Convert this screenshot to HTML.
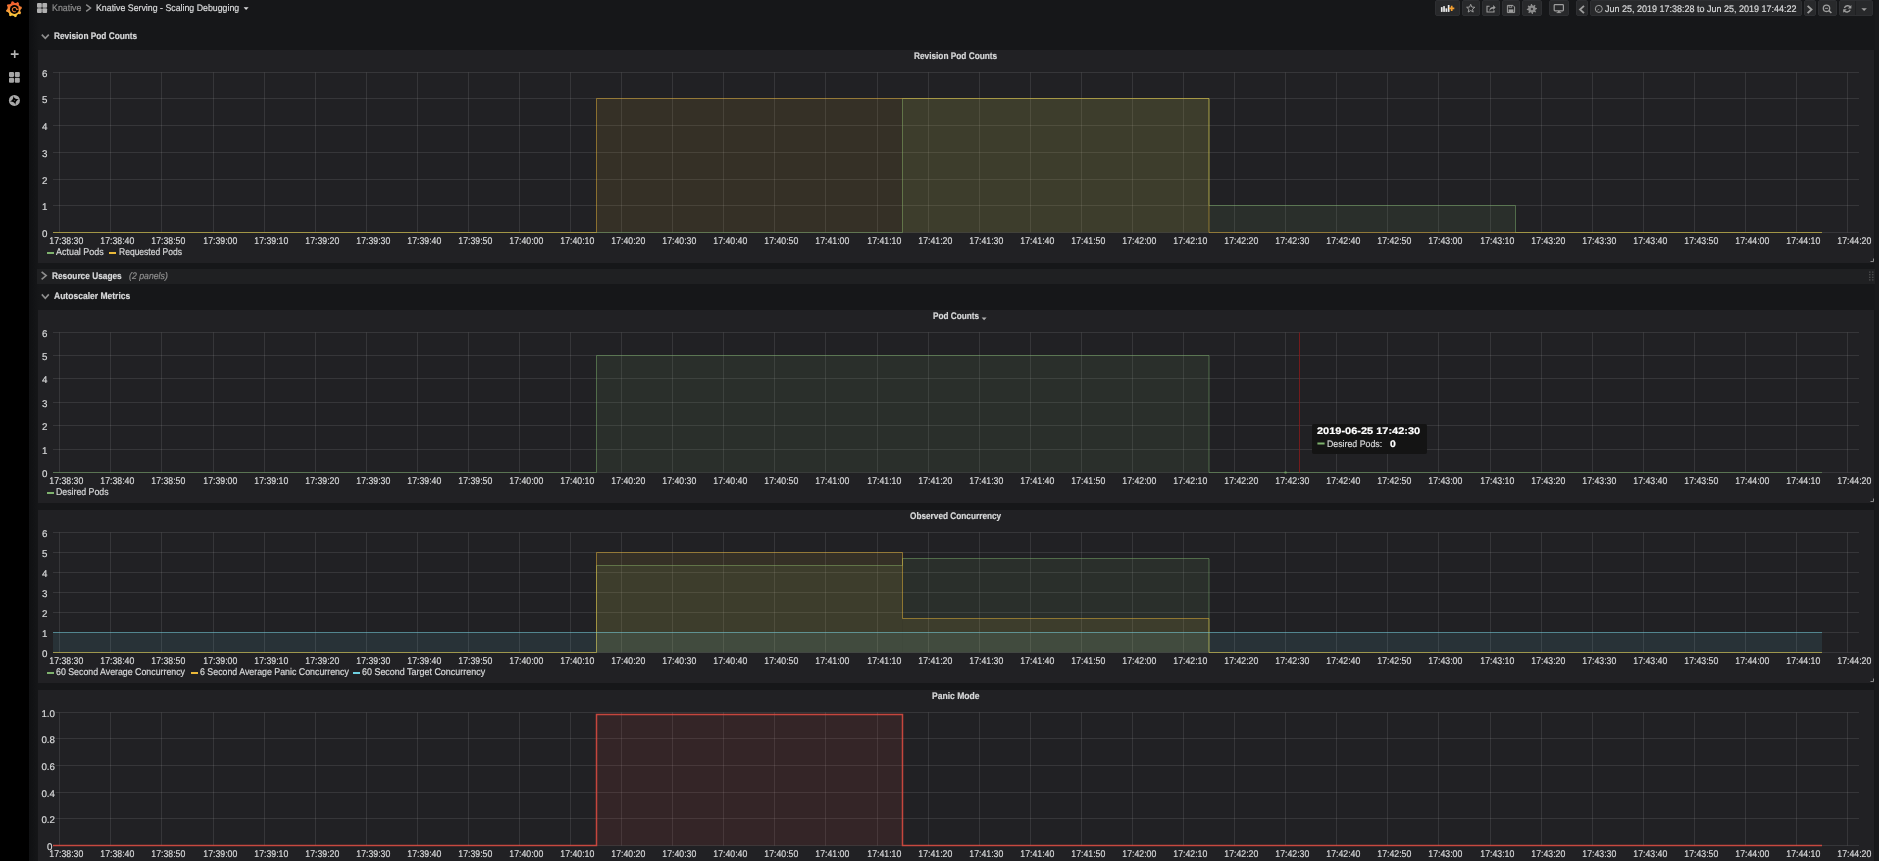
<!DOCTYPE html>
<html><head><meta charset="utf-8"><style>
html,body{margin:0;padding:0;width:1879px;height:861px;overflow:hidden;background:#161719;font-family:"Liberation Sans", sans-serif;text-rendering:geometricPrecision;}
svg text{text-rendering:geometricPrecision;stroke:#d8d9da;stroke-width:0.2px;}
.abs{position:absolute;}
svg.abs{will-change:transform;}
.t{position:absolute;white-space:pre;font-family:"Liberation Sans", sans-serif;-webkit-text-stroke:0.2px currentColor;}
#tx{position:absolute;left:0;top:0;width:1879px;height:861px;will-change:transform;}
.panel{position:absolute;background:#212124;}
.btn{position:absolute;top:0;height:16px;background:#28292b;border:1px solid #2e2f32;box-sizing:border-box;border-radius:2px;}
</style></head><body>
<div class="abs" style="left:0;top:0;width:29px;height:861px;background:#000000"></div>
<div class="abs" style="left:29px;top:0;width:10px;height:861px;background:linear-gradient(to right,#0f1012,#161719)"></div>
<div class="abs" style="left:1875px;top:0;width:4px;height:861px;background:#18191b"></div>
<div class="panel" style="left:38px;top:50px;width:1836px;height:213px"></div>
<div class="abs" style="left:37px;top:269px;width:1838px;height:15px;background:#1f2022"></div>
<div class="panel" style="left:38px;top:310px;width:1836px;height:193px"></div>
<div class="panel" style="left:38px;top:510px;width:1836px;height:173px"></div>
<div class="panel" style="left:38px;top:690px;width:1836px;height:180px"></div>
<div class="btn" style="left:1435px;width:25px"></div>
<div class="btn" style="left:1462px;width:18px"></div>
<div class="btn" style="left:1482px;width:18px"></div>
<div class="btn" style="left:1502px;width:18px"></div>
<div class="btn" style="left:1522px;width:20px"></div>
<div class="btn" style="left:1549px;width:20px"></div>
<div class="btn" style="left:1576px;width:12px"></div>
<div class="btn" style="left:1590px;width:212px"></div>
<div class="btn" style="left:1804px;width:12px"></div>
<div class="btn" style="left:1818px;width:19px"></div>
<div class="btn" style="left:1839px;width:34px"></div>
<svg class="abs" width="1879" height="861" viewBox="0 0 1879 861" font-family="Liberation Sans"><line x1="53.00" y1="232.50" x2="1859.00" y2="232.50" stroke="rgba(200,200,200,0.13)" stroke-width="1"/><text x="47.50" y="236.50" text-anchor="end" font-size="9.75" fill="#d8d9da">0</text><line x1="53.00" y1="205.50" x2="1859.00" y2="205.50" stroke="rgba(200,200,200,0.13)" stroke-width="1"/><text x="47.50" y="209.50" text-anchor="end" font-size="9.75" fill="#d8d9da">1</text><line x1="53.00" y1="179.50" x2="1859.00" y2="179.50" stroke="rgba(200,200,200,0.13)" stroke-width="1"/><text x="47.50" y="183.50" text-anchor="end" font-size="9.75" fill="#d8d9da">2</text><line x1="53.00" y1="152.50" x2="1859.00" y2="152.50" stroke="rgba(200,200,200,0.13)" stroke-width="1"/><text x="47.50" y="156.50" text-anchor="end" font-size="9.75" fill="#d8d9da">3</text><line x1="53.00" y1="125.50" x2="1859.00" y2="125.50" stroke="rgba(200,200,200,0.13)" stroke-width="1"/><text x="47.50" y="129.50" text-anchor="end" font-size="9.75" fill="#d8d9da">4</text><line x1="53.00" y1="98.50" x2="1859.00" y2="98.50" stroke="rgba(200,200,200,0.13)" stroke-width="1"/><text x="47.50" y="102.50" text-anchor="end" font-size="9.75" fill="#d8d9da">5</text><line x1="53.00" y1="72.50" x2="1859.00" y2="72.50" stroke="rgba(200,200,200,0.13)" stroke-width="1"/><text x="47.50" y="76.50" text-anchor="end" font-size="9.75" fill="#d8d9da">6</text><line x1="59.50" y1="72.50" x2="59.50" y2="232.50" stroke="rgba(200,200,200,0.13)" stroke-width="1"/><text x="66.30" y="244.00" text-anchor="middle" font-size="9.75" fill="#d8d9da" textLength="34" lengthAdjust="spacingAndGlyphs">17:38:30</text><line x1="110.50" y1="72.50" x2="110.50" y2="232.50" stroke="rgba(200,200,200,0.13)" stroke-width="1"/><text x="117.30" y="244.00" text-anchor="middle" font-size="9.75" fill="#d8d9da" textLength="34" lengthAdjust="spacingAndGlyphs">17:38:40</text><line x1="161.50" y1="72.50" x2="161.50" y2="232.50" stroke="rgba(200,200,200,0.13)" stroke-width="1"/><text x="168.30" y="244.00" text-anchor="middle" font-size="9.75" fill="#d8d9da" textLength="34" lengthAdjust="spacingAndGlyphs">17:38:50</text><line x1="213.50" y1="72.50" x2="213.50" y2="232.50" stroke="rgba(200,200,200,0.13)" stroke-width="1"/><text x="220.30" y="244.00" text-anchor="middle" font-size="9.75" fill="#d8d9da" textLength="34" lengthAdjust="spacingAndGlyphs">17:39:00</text><line x1="264.50" y1="72.50" x2="264.50" y2="232.50" stroke="rgba(200,200,200,0.13)" stroke-width="1"/><text x="271.30" y="244.00" text-anchor="middle" font-size="9.75" fill="#d8d9da" textLength="34" lengthAdjust="spacingAndGlyphs">17:39:10</text><line x1="315.50" y1="72.50" x2="315.50" y2="232.50" stroke="rgba(200,200,200,0.13)" stroke-width="1"/><text x="322.30" y="244.00" text-anchor="middle" font-size="9.75" fill="#d8d9da" textLength="34" lengthAdjust="spacingAndGlyphs">17:39:20</text><line x1="366.50" y1="72.50" x2="366.50" y2="232.50" stroke="rgba(200,200,200,0.13)" stroke-width="1"/><text x="373.30" y="244.00" text-anchor="middle" font-size="9.75" fill="#d8d9da" textLength="34" lengthAdjust="spacingAndGlyphs">17:39:30</text><line x1="417.50" y1="72.50" x2="417.50" y2="232.50" stroke="rgba(200,200,200,0.13)" stroke-width="1"/><text x="424.30" y="244.00" text-anchor="middle" font-size="9.75" fill="#d8d9da" textLength="34" lengthAdjust="spacingAndGlyphs">17:39:40</text><line x1="468.50" y1="72.50" x2="468.50" y2="232.50" stroke="rgba(200,200,200,0.13)" stroke-width="1"/><text x="475.30" y="244.00" text-anchor="middle" font-size="9.75" fill="#d8d9da" textLength="34" lengthAdjust="spacingAndGlyphs">17:39:50</text><line x1="519.50" y1="72.50" x2="519.50" y2="232.50" stroke="rgba(200,200,200,0.13)" stroke-width="1"/><text x="526.30" y="244.00" text-anchor="middle" font-size="9.75" fill="#d8d9da" textLength="34" lengthAdjust="spacingAndGlyphs">17:40:00</text><line x1="570.50" y1="72.50" x2="570.50" y2="232.50" stroke="rgba(200,200,200,0.13)" stroke-width="1"/><text x="577.30" y="244.00" text-anchor="middle" font-size="9.75" fill="#d8d9da" textLength="34" lengthAdjust="spacingAndGlyphs">17:40:10</text><line x1="621.50" y1="72.50" x2="621.50" y2="232.50" stroke="rgba(200,200,200,0.13)" stroke-width="1"/><text x="628.30" y="244.00" text-anchor="middle" font-size="9.75" fill="#d8d9da" textLength="34" lengthAdjust="spacingAndGlyphs">17:40:20</text><line x1="672.50" y1="72.50" x2="672.50" y2="232.50" stroke="rgba(200,200,200,0.13)" stroke-width="1"/><text x="679.30" y="244.00" text-anchor="middle" font-size="9.75" fill="#d8d9da" textLength="34" lengthAdjust="spacingAndGlyphs">17:40:30</text><line x1="723.50" y1="72.50" x2="723.50" y2="232.50" stroke="rgba(200,200,200,0.13)" stroke-width="1"/><text x="730.30" y="244.00" text-anchor="middle" font-size="9.75" fill="#d8d9da" textLength="34" lengthAdjust="spacingAndGlyphs">17:40:40</text><line x1="774.50" y1="72.50" x2="774.50" y2="232.50" stroke="rgba(200,200,200,0.13)" stroke-width="1"/><text x="781.30" y="244.00" text-anchor="middle" font-size="9.75" fill="#d8d9da" textLength="34" lengthAdjust="spacingAndGlyphs">17:40:50</text><line x1="825.50" y1="72.50" x2="825.50" y2="232.50" stroke="rgba(200,200,200,0.13)" stroke-width="1"/><text x="832.30" y="244.00" text-anchor="middle" font-size="9.75" fill="#d8d9da" textLength="34" lengthAdjust="spacingAndGlyphs">17:41:00</text><line x1="877.50" y1="72.50" x2="877.50" y2="232.50" stroke="rgba(200,200,200,0.13)" stroke-width="1"/><text x="884.30" y="244.00" text-anchor="middle" font-size="9.75" fill="#d8d9da" textLength="34" lengthAdjust="spacingAndGlyphs">17:41:10</text><line x1="928.50" y1="72.50" x2="928.50" y2="232.50" stroke="rgba(200,200,200,0.13)" stroke-width="1"/><text x="935.30" y="244.00" text-anchor="middle" font-size="9.75" fill="#d8d9da" textLength="34" lengthAdjust="spacingAndGlyphs">17:41:20</text><line x1="979.50" y1="72.50" x2="979.50" y2="232.50" stroke="rgba(200,200,200,0.13)" stroke-width="1"/><text x="986.30" y="244.00" text-anchor="middle" font-size="9.75" fill="#d8d9da" textLength="34" lengthAdjust="spacingAndGlyphs">17:41:30</text><line x1="1030.50" y1="72.50" x2="1030.50" y2="232.50" stroke="rgba(200,200,200,0.13)" stroke-width="1"/><text x="1037.30" y="244.00" text-anchor="middle" font-size="9.75" fill="#d8d9da" textLength="34" lengthAdjust="spacingAndGlyphs">17:41:40</text><line x1="1081.50" y1="72.50" x2="1081.50" y2="232.50" stroke="rgba(200,200,200,0.13)" stroke-width="1"/><text x="1088.30" y="244.00" text-anchor="middle" font-size="9.75" fill="#d8d9da" textLength="34" lengthAdjust="spacingAndGlyphs">17:41:50</text><line x1="1132.50" y1="72.50" x2="1132.50" y2="232.50" stroke="rgba(200,200,200,0.13)" stroke-width="1"/><text x="1139.30" y="244.00" text-anchor="middle" font-size="9.75" fill="#d8d9da" textLength="34" lengthAdjust="spacingAndGlyphs">17:42:00</text><line x1="1183.50" y1="72.50" x2="1183.50" y2="232.50" stroke="rgba(200,200,200,0.13)" stroke-width="1"/><text x="1190.30" y="244.00" text-anchor="middle" font-size="9.75" fill="#d8d9da" textLength="34" lengthAdjust="spacingAndGlyphs">17:42:10</text><line x1="1234.50" y1="72.50" x2="1234.50" y2="232.50" stroke="rgba(200,200,200,0.13)" stroke-width="1"/><text x="1241.30" y="244.00" text-anchor="middle" font-size="9.75" fill="#d8d9da" textLength="34" lengthAdjust="spacingAndGlyphs">17:42:20</text><line x1="1285.50" y1="72.50" x2="1285.50" y2="232.50" stroke="rgba(200,200,200,0.13)" stroke-width="1"/><text x="1292.30" y="244.00" text-anchor="middle" font-size="9.75" fill="#d8d9da" textLength="34" lengthAdjust="spacingAndGlyphs">17:42:30</text><line x1="1336.50" y1="72.50" x2="1336.50" y2="232.50" stroke="rgba(200,200,200,0.13)" stroke-width="1"/><text x="1343.30" y="244.00" text-anchor="middle" font-size="9.75" fill="#d8d9da" textLength="34" lengthAdjust="spacingAndGlyphs">17:42:40</text><line x1="1387.50" y1="72.50" x2="1387.50" y2="232.50" stroke="rgba(200,200,200,0.13)" stroke-width="1"/><text x="1394.30" y="244.00" text-anchor="middle" font-size="9.75" fill="#d8d9da" textLength="34" lengthAdjust="spacingAndGlyphs">17:42:50</text><line x1="1438.50" y1="72.50" x2="1438.50" y2="232.50" stroke="rgba(200,200,200,0.13)" stroke-width="1"/><text x="1445.30" y="244.00" text-anchor="middle" font-size="9.75" fill="#d8d9da" textLength="34" lengthAdjust="spacingAndGlyphs">17:43:00</text><line x1="1490.50" y1="72.50" x2="1490.50" y2="232.50" stroke="rgba(200,200,200,0.13)" stroke-width="1"/><text x="1497.30" y="244.00" text-anchor="middle" font-size="9.75" fill="#d8d9da" textLength="34" lengthAdjust="spacingAndGlyphs">17:43:10</text><line x1="1541.50" y1="72.50" x2="1541.50" y2="232.50" stroke="rgba(200,200,200,0.13)" stroke-width="1"/><text x="1548.30" y="244.00" text-anchor="middle" font-size="9.75" fill="#d8d9da" textLength="34" lengthAdjust="spacingAndGlyphs">17:43:20</text><line x1="1592.50" y1="72.50" x2="1592.50" y2="232.50" stroke="rgba(200,200,200,0.13)" stroke-width="1"/><text x="1599.30" y="244.00" text-anchor="middle" font-size="9.75" fill="#d8d9da" textLength="34" lengthAdjust="spacingAndGlyphs">17:43:30</text><line x1="1643.50" y1="72.50" x2="1643.50" y2="232.50" stroke="rgba(200,200,200,0.13)" stroke-width="1"/><text x="1650.30" y="244.00" text-anchor="middle" font-size="9.75" fill="#d8d9da" textLength="34" lengthAdjust="spacingAndGlyphs">17:43:40</text><line x1="1694.50" y1="72.50" x2="1694.50" y2="232.50" stroke="rgba(200,200,200,0.13)" stroke-width="1"/><text x="1701.30" y="244.00" text-anchor="middle" font-size="9.75" fill="#d8d9da" textLength="34" lengthAdjust="spacingAndGlyphs">17:43:50</text><line x1="1745.50" y1="72.50" x2="1745.50" y2="232.50" stroke="rgba(200,200,200,0.13)" stroke-width="1"/><text x="1752.30" y="244.00" text-anchor="middle" font-size="9.75" fill="#d8d9da" textLength="34" lengthAdjust="spacingAndGlyphs">17:44:00</text><line x1="1796.50" y1="72.50" x2="1796.50" y2="232.50" stroke="rgba(200,200,200,0.13)" stroke-width="1"/><text x="1803.30" y="244.00" text-anchor="middle" font-size="9.75" fill="#d8d9da" textLength="34" lengthAdjust="spacingAndGlyphs">17:44:10</text><line x1="1847.50" y1="72.50" x2="1847.50" y2="232.50" stroke="rgba(200,200,200,0.13)" stroke-width="1"/><text x="1854.30" y="244.00" text-anchor="middle" font-size="9.75" fill="#d8d9da" textLength="34" lengthAdjust="spacingAndGlyphs">17:44:20</text><rect x="902.50" y="98.50" width="306.50" height="134.00" fill="#7EB26D" fill-opacity="0.1"/><rect x="1209.00" y="205.50" width="306.50" height="27.00" fill="#7EB26D" fill-opacity="0.1"/><path d="M53.00,232.50 L902.50,232.50 L902.50,98.50 L1209.00,98.50 L1209.00,205.50 L1515.50,205.50 L1515.50,232.50 L1822.00,232.50" fill="none" stroke="#7EB26D" stroke-width="1" stroke-opacity="0.5"/><rect x="596.50" y="98.50" width="612.50" height="134.00" fill="#EAB839" fill-opacity="0.1"/><path d="M53.00,232.50 L596.50,232.50 L596.50,98.50 L1209.00,98.50 L1209.00,232.50 L1822.00,232.50" fill="none" stroke="#EAB839" stroke-width="1" stroke-opacity="0.5"/><line x1="53.00" y1="472.50" x2="1859.00" y2="472.50" stroke="rgba(200,200,200,0.13)" stroke-width="1"/><text x="47.50" y="476.50" text-anchor="end" font-size="9.75" fill="#d8d9da">0</text><line x1="53.00" y1="449.50" x2="1859.00" y2="449.50" stroke="rgba(200,200,200,0.13)" stroke-width="1"/><text x="47.50" y="453.50" text-anchor="end" font-size="9.75" fill="#d8d9da">1</text><line x1="53.00" y1="425.50" x2="1859.00" y2="425.50" stroke="rgba(200,200,200,0.13)" stroke-width="1"/><text x="47.50" y="429.50" text-anchor="end" font-size="9.75" fill="#d8d9da">2</text><line x1="53.00" y1="402.50" x2="1859.00" y2="402.50" stroke="rgba(200,200,200,0.13)" stroke-width="1"/><text x="47.50" y="406.50" text-anchor="end" font-size="9.75" fill="#d8d9da">3</text><line x1="53.00" y1="378.50" x2="1859.00" y2="378.50" stroke="rgba(200,200,200,0.13)" stroke-width="1"/><text x="47.50" y="382.50" text-anchor="end" font-size="9.75" fill="#d8d9da">4</text><line x1="53.00" y1="355.50" x2="1859.00" y2="355.50" stroke="rgba(200,200,200,0.13)" stroke-width="1"/><text x="47.50" y="359.50" text-anchor="end" font-size="9.75" fill="#d8d9da">5</text><line x1="53.00" y1="332.50" x2="1859.00" y2="332.50" stroke="rgba(200,200,200,0.13)" stroke-width="1"/><text x="47.50" y="336.50" text-anchor="end" font-size="9.75" fill="#d8d9da">6</text><line x1="59.50" y1="332.50" x2="59.50" y2="472.50" stroke="rgba(200,200,200,0.13)" stroke-width="1"/><text x="66.30" y="484.00" text-anchor="middle" font-size="9.75" fill="#d8d9da" textLength="34" lengthAdjust="spacingAndGlyphs">17:38:30</text><line x1="110.50" y1="332.50" x2="110.50" y2="472.50" stroke="rgba(200,200,200,0.13)" stroke-width="1"/><text x="117.30" y="484.00" text-anchor="middle" font-size="9.75" fill="#d8d9da" textLength="34" lengthAdjust="spacingAndGlyphs">17:38:40</text><line x1="161.50" y1="332.50" x2="161.50" y2="472.50" stroke="rgba(200,200,200,0.13)" stroke-width="1"/><text x="168.30" y="484.00" text-anchor="middle" font-size="9.75" fill="#d8d9da" textLength="34" lengthAdjust="spacingAndGlyphs">17:38:50</text><line x1="213.50" y1="332.50" x2="213.50" y2="472.50" stroke="rgba(200,200,200,0.13)" stroke-width="1"/><text x="220.30" y="484.00" text-anchor="middle" font-size="9.75" fill="#d8d9da" textLength="34" lengthAdjust="spacingAndGlyphs">17:39:00</text><line x1="264.50" y1="332.50" x2="264.50" y2="472.50" stroke="rgba(200,200,200,0.13)" stroke-width="1"/><text x="271.30" y="484.00" text-anchor="middle" font-size="9.75" fill="#d8d9da" textLength="34" lengthAdjust="spacingAndGlyphs">17:39:10</text><line x1="315.50" y1="332.50" x2="315.50" y2="472.50" stroke="rgba(200,200,200,0.13)" stroke-width="1"/><text x="322.30" y="484.00" text-anchor="middle" font-size="9.75" fill="#d8d9da" textLength="34" lengthAdjust="spacingAndGlyphs">17:39:20</text><line x1="366.50" y1="332.50" x2="366.50" y2="472.50" stroke="rgba(200,200,200,0.13)" stroke-width="1"/><text x="373.30" y="484.00" text-anchor="middle" font-size="9.75" fill="#d8d9da" textLength="34" lengthAdjust="spacingAndGlyphs">17:39:30</text><line x1="417.50" y1="332.50" x2="417.50" y2="472.50" stroke="rgba(200,200,200,0.13)" stroke-width="1"/><text x="424.30" y="484.00" text-anchor="middle" font-size="9.75" fill="#d8d9da" textLength="34" lengthAdjust="spacingAndGlyphs">17:39:40</text><line x1="468.50" y1="332.50" x2="468.50" y2="472.50" stroke="rgba(200,200,200,0.13)" stroke-width="1"/><text x="475.30" y="484.00" text-anchor="middle" font-size="9.75" fill="#d8d9da" textLength="34" lengthAdjust="spacingAndGlyphs">17:39:50</text><line x1="519.50" y1="332.50" x2="519.50" y2="472.50" stroke="rgba(200,200,200,0.13)" stroke-width="1"/><text x="526.30" y="484.00" text-anchor="middle" font-size="9.75" fill="#d8d9da" textLength="34" lengthAdjust="spacingAndGlyphs">17:40:00</text><line x1="570.50" y1="332.50" x2="570.50" y2="472.50" stroke="rgba(200,200,200,0.13)" stroke-width="1"/><text x="577.30" y="484.00" text-anchor="middle" font-size="9.75" fill="#d8d9da" textLength="34" lengthAdjust="spacingAndGlyphs">17:40:10</text><line x1="621.50" y1="332.50" x2="621.50" y2="472.50" stroke="rgba(200,200,200,0.13)" stroke-width="1"/><text x="628.30" y="484.00" text-anchor="middle" font-size="9.75" fill="#d8d9da" textLength="34" lengthAdjust="spacingAndGlyphs">17:40:20</text><line x1="672.50" y1="332.50" x2="672.50" y2="472.50" stroke="rgba(200,200,200,0.13)" stroke-width="1"/><text x="679.30" y="484.00" text-anchor="middle" font-size="9.75" fill="#d8d9da" textLength="34" lengthAdjust="spacingAndGlyphs">17:40:30</text><line x1="723.50" y1="332.50" x2="723.50" y2="472.50" stroke="rgba(200,200,200,0.13)" stroke-width="1"/><text x="730.30" y="484.00" text-anchor="middle" font-size="9.75" fill="#d8d9da" textLength="34" lengthAdjust="spacingAndGlyphs">17:40:40</text><line x1="774.50" y1="332.50" x2="774.50" y2="472.50" stroke="rgba(200,200,200,0.13)" stroke-width="1"/><text x="781.30" y="484.00" text-anchor="middle" font-size="9.75" fill="#d8d9da" textLength="34" lengthAdjust="spacingAndGlyphs">17:40:50</text><line x1="825.50" y1="332.50" x2="825.50" y2="472.50" stroke="rgba(200,200,200,0.13)" stroke-width="1"/><text x="832.30" y="484.00" text-anchor="middle" font-size="9.75" fill="#d8d9da" textLength="34" lengthAdjust="spacingAndGlyphs">17:41:00</text><line x1="877.50" y1="332.50" x2="877.50" y2="472.50" stroke="rgba(200,200,200,0.13)" stroke-width="1"/><text x="884.30" y="484.00" text-anchor="middle" font-size="9.75" fill="#d8d9da" textLength="34" lengthAdjust="spacingAndGlyphs">17:41:10</text><line x1="928.50" y1="332.50" x2="928.50" y2="472.50" stroke="rgba(200,200,200,0.13)" stroke-width="1"/><text x="935.30" y="484.00" text-anchor="middle" font-size="9.75" fill="#d8d9da" textLength="34" lengthAdjust="spacingAndGlyphs">17:41:20</text><line x1="979.50" y1="332.50" x2="979.50" y2="472.50" stroke="rgba(200,200,200,0.13)" stroke-width="1"/><text x="986.30" y="484.00" text-anchor="middle" font-size="9.75" fill="#d8d9da" textLength="34" lengthAdjust="spacingAndGlyphs">17:41:30</text><line x1="1030.50" y1="332.50" x2="1030.50" y2="472.50" stroke="rgba(200,200,200,0.13)" stroke-width="1"/><text x="1037.30" y="484.00" text-anchor="middle" font-size="9.75" fill="#d8d9da" textLength="34" lengthAdjust="spacingAndGlyphs">17:41:40</text><line x1="1081.50" y1="332.50" x2="1081.50" y2="472.50" stroke="rgba(200,200,200,0.13)" stroke-width="1"/><text x="1088.30" y="484.00" text-anchor="middle" font-size="9.75" fill="#d8d9da" textLength="34" lengthAdjust="spacingAndGlyphs">17:41:50</text><line x1="1132.50" y1="332.50" x2="1132.50" y2="472.50" stroke="rgba(200,200,200,0.13)" stroke-width="1"/><text x="1139.30" y="484.00" text-anchor="middle" font-size="9.75" fill="#d8d9da" textLength="34" lengthAdjust="spacingAndGlyphs">17:42:00</text><line x1="1183.50" y1="332.50" x2="1183.50" y2="472.50" stroke="rgba(200,200,200,0.13)" stroke-width="1"/><text x="1190.30" y="484.00" text-anchor="middle" font-size="9.75" fill="#d8d9da" textLength="34" lengthAdjust="spacingAndGlyphs">17:42:10</text><line x1="1234.50" y1="332.50" x2="1234.50" y2="472.50" stroke="rgba(200,200,200,0.13)" stroke-width="1"/><text x="1241.30" y="484.00" text-anchor="middle" font-size="9.75" fill="#d8d9da" textLength="34" lengthAdjust="spacingAndGlyphs">17:42:20</text><line x1="1285.50" y1="332.50" x2="1285.50" y2="472.50" stroke="rgba(200,200,200,0.13)" stroke-width="1"/><text x="1292.30" y="484.00" text-anchor="middle" font-size="9.75" fill="#d8d9da" textLength="34" lengthAdjust="spacingAndGlyphs">17:42:30</text><line x1="1336.50" y1="332.50" x2="1336.50" y2="472.50" stroke="rgba(200,200,200,0.13)" stroke-width="1"/><text x="1343.30" y="484.00" text-anchor="middle" font-size="9.75" fill="#d8d9da" textLength="34" lengthAdjust="spacingAndGlyphs">17:42:40</text><line x1="1387.50" y1="332.50" x2="1387.50" y2="472.50" stroke="rgba(200,200,200,0.13)" stroke-width="1"/><text x="1394.30" y="484.00" text-anchor="middle" font-size="9.75" fill="#d8d9da" textLength="34" lengthAdjust="spacingAndGlyphs">17:42:50</text><line x1="1438.50" y1="332.50" x2="1438.50" y2="472.50" stroke="rgba(200,200,200,0.13)" stroke-width="1"/><text x="1445.30" y="484.00" text-anchor="middle" font-size="9.75" fill="#d8d9da" textLength="34" lengthAdjust="spacingAndGlyphs">17:43:00</text><line x1="1490.50" y1="332.50" x2="1490.50" y2="472.50" stroke="rgba(200,200,200,0.13)" stroke-width="1"/><text x="1497.30" y="484.00" text-anchor="middle" font-size="9.75" fill="#d8d9da" textLength="34" lengthAdjust="spacingAndGlyphs">17:43:10</text><line x1="1541.50" y1="332.50" x2="1541.50" y2="472.50" stroke="rgba(200,200,200,0.13)" stroke-width="1"/><text x="1548.30" y="484.00" text-anchor="middle" font-size="9.75" fill="#d8d9da" textLength="34" lengthAdjust="spacingAndGlyphs">17:43:20</text><line x1="1592.50" y1="332.50" x2="1592.50" y2="472.50" stroke="rgba(200,200,200,0.13)" stroke-width="1"/><text x="1599.30" y="484.00" text-anchor="middle" font-size="9.75" fill="#d8d9da" textLength="34" lengthAdjust="spacingAndGlyphs">17:43:30</text><line x1="1643.50" y1="332.50" x2="1643.50" y2="472.50" stroke="rgba(200,200,200,0.13)" stroke-width="1"/><text x="1650.30" y="484.00" text-anchor="middle" font-size="9.75" fill="#d8d9da" textLength="34" lengthAdjust="spacingAndGlyphs">17:43:40</text><line x1="1694.50" y1="332.50" x2="1694.50" y2="472.50" stroke="rgba(200,200,200,0.13)" stroke-width="1"/><text x="1701.30" y="484.00" text-anchor="middle" font-size="9.75" fill="#d8d9da" textLength="34" lengthAdjust="spacingAndGlyphs">17:43:50</text><line x1="1745.50" y1="332.50" x2="1745.50" y2="472.50" stroke="rgba(200,200,200,0.13)" stroke-width="1"/><text x="1752.30" y="484.00" text-anchor="middle" font-size="9.75" fill="#d8d9da" textLength="34" lengthAdjust="spacingAndGlyphs">17:44:00</text><line x1="1796.50" y1="332.50" x2="1796.50" y2="472.50" stroke="rgba(200,200,200,0.13)" stroke-width="1"/><text x="1803.30" y="484.00" text-anchor="middle" font-size="9.75" fill="#d8d9da" textLength="34" lengthAdjust="spacingAndGlyphs">17:44:10</text><line x1="1847.50" y1="332.50" x2="1847.50" y2="472.50" stroke="rgba(200,200,200,0.13)" stroke-width="1"/><text x="1854.30" y="484.00" text-anchor="middle" font-size="9.75" fill="#d8d9da" textLength="34" lengthAdjust="spacingAndGlyphs">17:44:20</text><rect x="596.50" y="355.50" width="612.50" height="117.00" fill="#7EB26D" fill-opacity="0.1"/><path d="M53.00,472.50 L596.50,472.50 L596.50,355.50 L1209.00,355.50 L1209.00,472.50 L1822.00,472.50" fill="none" stroke="#7EB26D" stroke-width="1" stroke-opacity="0.5"/><line x1="1299.5" y1="332.5" x2="1299.5" y2="472.5" stroke="#8a1a1a" stroke-opacity="0.8"/><line x1="53.00" y1="652.50" x2="1859.00" y2="652.50" stroke="rgba(200,200,200,0.13)" stroke-width="1"/><text x="47.50" y="656.50" text-anchor="end" font-size="9.75" fill="#d8d9da">0</text><line x1="53.00" y1="632.50" x2="1859.00" y2="632.50" stroke="rgba(200,200,200,0.13)" stroke-width="1"/><text x="47.50" y="636.50" text-anchor="end" font-size="9.75" fill="#d8d9da">1</text><line x1="53.00" y1="612.50" x2="1859.00" y2="612.50" stroke="rgba(200,200,200,0.13)" stroke-width="1"/><text x="47.50" y="616.50" text-anchor="end" font-size="9.75" fill="#d8d9da">2</text><line x1="53.00" y1="592.50" x2="1859.00" y2="592.50" stroke="rgba(200,200,200,0.13)" stroke-width="1"/><text x="47.50" y="596.50" text-anchor="end" font-size="9.75" fill="#d8d9da">3</text><line x1="53.00" y1="572.50" x2="1859.00" y2="572.50" stroke="rgba(200,200,200,0.13)" stroke-width="1"/><text x="47.50" y="576.50" text-anchor="end" font-size="9.75" fill="#d8d9da">4</text><line x1="53.00" y1="552.50" x2="1859.00" y2="552.50" stroke="rgba(200,200,200,0.13)" stroke-width="1"/><text x="47.50" y="556.50" text-anchor="end" font-size="9.75" fill="#d8d9da">5</text><line x1="53.00" y1="532.50" x2="1859.00" y2="532.50" stroke="rgba(200,200,200,0.13)" stroke-width="1"/><text x="47.50" y="536.50" text-anchor="end" font-size="9.75" fill="#d8d9da">6</text><line x1="59.50" y1="532.50" x2="59.50" y2="652.50" stroke="rgba(200,200,200,0.13)" stroke-width="1"/><text x="66.30" y="664.00" text-anchor="middle" font-size="9.75" fill="#d8d9da" textLength="34" lengthAdjust="spacingAndGlyphs">17:38:30</text><line x1="110.50" y1="532.50" x2="110.50" y2="652.50" stroke="rgba(200,200,200,0.13)" stroke-width="1"/><text x="117.30" y="664.00" text-anchor="middle" font-size="9.75" fill="#d8d9da" textLength="34" lengthAdjust="spacingAndGlyphs">17:38:40</text><line x1="161.50" y1="532.50" x2="161.50" y2="652.50" stroke="rgba(200,200,200,0.13)" stroke-width="1"/><text x="168.30" y="664.00" text-anchor="middle" font-size="9.75" fill="#d8d9da" textLength="34" lengthAdjust="spacingAndGlyphs">17:38:50</text><line x1="213.50" y1="532.50" x2="213.50" y2="652.50" stroke="rgba(200,200,200,0.13)" stroke-width="1"/><text x="220.30" y="664.00" text-anchor="middle" font-size="9.75" fill="#d8d9da" textLength="34" lengthAdjust="spacingAndGlyphs">17:39:00</text><line x1="264.50" y1="532.50" x2="264.50" y2="652.50" stroke="rgba(200,200,200,0.13)" stroke-width="1"/><text x="271.30" y="664.00" text-anchor="middle" font-size="9.75" fill="#d8d9da" textLength="34" lengthAdjust="spacingAndGlyphs">17:39:10</text><line x1="315.50" y1="532.50" x2="315.50" y2="652.50" stroke="rgba(200,200,200,0.13)" stroke-width="1"/><text x="322.30" y="664.00" text-anchor="middle" font-size="9.75" fill="#d8d9da" textLength="34" lengthAdjust="spacingAndGlyphs">17:39:20</text><line x1="366.50" y1="532.50" x2="366.50" y2="652.50" stroke="rgba(200,200,200,0.13)" stroke-width="1"/><text x="373.30" y="664.00" text-anchor="middle" font-size="9.75" fill="#d8d9da" textLength="34" lengthAdjust="spacingAndGlyphs">17:39:30</text><line x1="417.50" y1="532.50" x2="417.50" y2="652.50" stroke="rgba(200,200,200,0.13)" stroke-width="1"/><text x="424.30" y="664.00" text-anchor="middle" font-size="9.75" fill="#d8d9da" textLength="34" lengthAdjust="spacingAndGlyphs">17:39:40</text><line x1="468.50" y1="532.50" x2="468.50" y2="652.50" stroke="rgba(200,200,200,0.13)" stroke-width="1"/><text x="475.30" y="664.00" text-anchor="middle" font-size="9.75" fill="#d8d9da" textLength="34" lengthAdjust="spacingAndGlyphs">17:39:50</text><line x1="519.50" y1="532.50" x2="519.50" y2="652.50" stroke="rgba(200,200,200,0.13)" stroke-width="1"/><text x="526.30" y="664.00" text-anchor="middle" font-size="9.75" fill="#d8d9da" textLength="34" lengthAdjust="spacingAndGlyphs">17:40:00</text><line x1="570.50" y1="532.50" x2="570.50" y2="652.50" stroke="rgba(200,200,200,0.13)" stroke-width="1"/><text x="577.30" y="664.00" text-anchor="middle" font-size="9.75" fill="#d8d9da" textLength="34" lengthAdjust="spacingAndGlyphs">17:40:10</text><line x1="621.50" y1="532.50" x2="621.50" y2="652.50" stroke="rgba(200,200,200,0.13)" stroke-width="1"/><text x="628.30" y="664.00" text-anchor="middle" font-size="9.75" fill="#d8d9da" textLength="34" lengthAdjust="spacingAndGlyphs">17:40:20</text><line x1="672.50" y1="532.50" x2="672.50" y2="652.50" stroke="rgba(200,200,200,0.13)" stroke-width="1"/><text x="679.30" y="664.00" text-anchor="middle" font-size="9.75" fill="#d8d9da" textLength="34" lengthAdjust="spacingAndGlyphs">17:40:30</text><line x1="723.50" y1="532.50" x2="723.50" y2="652.50" stroke="rgba(200,200,200,0.13)" stroke-width="1"/><text x="730.30" y="664.00" text-anchor="middle" font-size="9.75" fill="#d8d9da" textLength="34" lengthAdjust="spacingAndGlyphs">17:40:40</text><line x1="774.50" y1="532.50" x2="774.50" y2="652.50" stroke="rgba(200,200,200,0.13)" stroke-width="1"/><text x="781.30" y="664.00" text-anchor="middle" font-size="9.75" fill="#d8d9da" textLength="34" lengthAdjust="spacingAndGlyphs">17:40:50</text><line x1="825.50" y1="532.50" x2="825.50" y2="652.50" stroke="rgba(200,200,200,0.13)" stroke-width="1"/><text x="832.30" y="664.00" text-anchor="middle" font-size="9.75" fill="#d8d9da" textLength="34" lengthAdjust="spacingAndGlyphs">17:41:00</text><line x1="877.50" y1="532.50" x2="877.50" y2="652.50" stroke="rgba(200,200,200,0.13)" stroke-width="1"/><text x="884.30" y="664.00" text-anchor="middle" font-size="9.75" fill="#d8d9da" textLength="34" lengthAdjust="spacingAndGlyphs">17:41:10</text><line x1="928.50" y1="532.50" x2="928.50" y2="652.50" stroke="rgba(200,200,200,0.13)" stroke-width="1"/><text x="935.30" y="664.00" text-anchor="middle" font-size="9.75" fill="#d8d9da" textLength="34" lengthAdjust="spacingAndGlyphs">17:41:20</text><line x1="979.50" y1="532.50" x2="979.50" y2="652.50" stroke="rgba(200,200,200,0.13)" stroke-width="1"/><text x="986.30" y="664.00" text-anchor="middle" font-size="9.75" fill="#d8d9da" textLength="34" lengthAdjust="spacingAndGlyphs">17:41:30</text><line x1="1030.50" y1="532.50" x2="1030.50" y2="652.50" stroke="rgba(200,200,200,0.13)" stroke-width="1"/><text x="1037.30" y="664.00" text-anchor="middle" font-size="9.75" fill="#d8d9da" textLength="34" lengthAdjust="spacingAndGlyphs">17:41:40</text><line x1="1081.50" y1="532.50" x2="1081.50" y2="652.50" stroke="rgba(200,200,200,0.13)" stroke-width="1"/><text x="1088.30" y="664.00" text-anchor="middle" font-size="9.75" fill="#d8d9da" textLength="34" lengthAdjust="spacingAndGlyphs">17:41:50</text><line x1="1132.50" y1="532.50" x2="1132.50" y2="652.50" stroke="rgba(200,200,200,0.13)" stroke-width="1"/><text x="1139.30" y="664.00" text-anchor="middle" font-size="9.75" fill="#d8d9da" textLength="34" lengthAdjust="spacingAndGlyphs">17:42:00</text><line x1="1183.50" y1="532.50" x2="1183.50" y2="652.50" stroke="rgba(200,200,200,0.13)" stroke-width="1"/><text x="1190.30" y="664.00" text-anchor="middle" font-size="9.75" fill="#d8d9da" textLength="34" lengthAdjust="spacingAndGlyphs">17:42:10</text><line x1="1234.50" y1="532.50" x2="1234.50" y2="652.50" stroke="rgba(200,200,200,0.13)" stroke-width="1"/><text x="1241.30" y="664.00" text-anchor="middle" font-size="9.75" fill="#d8d9da" textLength="34" lengthAdjust="spacingAndGlyphs">17:42:20</text><line x1="1285.50" y1="532.50" x2="1285.50" y2="652.50" stroke="rgba(200,200,200,0.13)" stroke-width="1"/><text x="1292.30" y="664.00" text-anchor="middle" font-size="9.75" fill="#d8d9da" textLength="34" lengthAdjust="spacingAndGlyphs">17:42:30</text><line x1="1336.50" y1="532.50" x2="1336.50" y2="652.50" stroke="rgba(200,200,200,0.13)" stroke-width="1"/><text x="1343.30" y="664.00" text-anchor="middle" font-size="9.75" fill="#d8d9da" textLength="34" lengthAdjust="spacingAndGlyphs">17:42:40</text><line x1="1387.50" y1="532.50" x2="1387.50" y2="652.50" stroke="rgba(200,200,200,0.13)" stroke-width="1"/><text x="1394.30" y="664.00" text-anchor="middle" font-size="9.75" fill="#d8d9da" textLength="34" lengthAdjust="spacingAndGlyphs">17:42:50</text><line x1="1438.50" y1="532.50" x2="1438.50" y2="652.50" stroke="rgba(200,200,200,0.13)" stroke-width="1"/><text x="1445.30" y="664.00" text-anchor="middle" font-size="9.75" fill="#d8d9da" textLength="34" lengthAdjust="spacingAndGlyphs">17:43:00</text><line x1="1490.50" y1="532.50" x2="1490.50" y2="652.50" stroke="rgba(200,200,200,0.13)" stroke-width="1"/><text x="1497.30" y="664.00" text-anchor="middle" font-size="9.75" fill="#d8d9da" textLength="34" lengthAdjust="spacingAndGlyphs">17:43:10</text><line x1="1541.50" y1="532.50" x2="1541.50" y2="652.50" stroke="rgba(200,200,200,0.13)" stroke-width="1"/><text x="1548.30" y="664.00" text-anchor="middle" font-size="9.75" fill="#d8d9da" textLength="34" lengthAdjust="spacingAndGlyphs">17:43:20</text><line x1="1592.50" y1="532.50" x2="1592.50" y2="652.50" stroke="rgba(200,200,200,0.13)" stroke-width="1"/><text x="1599.30" y="664.00" text-anchor="middle" font-size="9.75" fill="#d8d9da" textLength="34" lengthAdjust="spacingAndGlyphs">17:43:30</text><line x1="1643.50" y1="532.50" x2="1643.50" y2="652.50" stroke="rgba(200,200,200,0.13)" stroke-width="1"/><text x="1650.30" y="664.00" text-anchor="middle" font-size="9.75" fill="#d8d9da" textLength="34" lengthAdjust="spacingAndGlyphs">17:43:40</text><line x1="1694.50" y1="532.50" x2="1694.50" y2="652.50" stroke="rgba(200,200,200,0.13)" stroke-width="1"/><text x="1701.30" y="664.00" text-anchor="middle" font-size="9.75" fill="#d8d9da" textLength="34" lengthAdjust="spacingAndGlyphs">17:43:50</text><line x1="1745.50" y1="532.50" x2="1745.50" y2="652.50" stroke="rgba(200,200,200,0.13)" stroke-width="1"/><text x="1752.30" y="664.00" text-anchor="middle" font-size="9.75" fill="#d8d9da" textLength="34" lengthAdjust="spacingAndGlyphs">17:44:00</text><line x1="1796.50" y1="532.50" x2="1796.50" y2="652.50" stroke="rgba(200,200,200,0.13)" stroke-width="1"/><text x="1803.30" y="664.00" text-anchor="middle" font-size="9.75" fill="#d8d9da" textLength="34" lengthAdjust="spacingAndGlyphs">17:44:10</text><line x1="1847.50" y1="532.50" x2="1847.50" y2="652.50" stroke="rgba(200,200,200,0.13)" stroke-width="1"/><text x="1854.30" y="664.00" text-anchor="middle" font-size="9.75" fill="#d8d9da" textLength="34" lengthAdjust="spacingAndGlyphs">17:44:20</text><rect x="596.50" y="565.50" width="306.00" height="87.00" fill="#7EB26D" fill-opacity="0.1"/><rect x="902.50" y="558.50" width="306.50" height="94.00" fill="#7EB26D" fill-opacity="0.1"/><path d="M53.00,652.50 L596.50,652.50 L596.50,565.50 L902.50,565.50 L902.50,558.50 L1209.00,558.50 L1209.00,652.50 L1822.00,652.50" fill="none" stroke="#7EB26D" stroke-width="1" stroke-opacity="0.5"/><rect x="596.50" y="552.50" width="306.00" height="100.00" fill="#EAB839" fill-opacity="0.1"/><rect x="902.50" y="618.50" width="306.50" height="34.00" fill="#EAB839" fill-opacity="0.1"/><path d="M53.00,652.50 L596.50,652.50 L596.50,552.50 L902.50,552.50 L902.50,618.50 L1209.00,618.50 L1209.00,652.50 L1822.00,652.50" fill="none" stroke="#EAB839" stroke-width="1" stroke-opacity="0.5"/><rect x="53.00" y="632.50" width="1769.00" height="20.00" fill="#6ED0E0" fill-opacity="0.1"/><path d="M53.00,632.50 L1822.00,632.50" fill="none" stroke="#6ED0E0" stroke-width="1" stroke-opacity="0.5"/><line x1="55.50" y1="845.50" x2="1859.00" y2="845.50" stroke="rgba(200,200,200,0.13)" stroke-width="1"/><text x="52.40" y="849.50" text-anchor="end" font-size="9.75" fill="#d8d9da">0</text><line x1="55.50" y1="818.50" x2="1859.00" y2="818.50" stroke="rgba(200,200,200,0.13)" stroke-width="1"/><text x="55.00" y="822.50" text-anchor="end" font-size="9.75" fill="#d8d9da">0.2</text><line x1="55.50" y1="792.50" x2="1859.00" y2="792.50" stroke="rgba(200,200,200,0.13)" stroke-width="1"/><text x="55.00" y="796.50" text-anchor="end" font-size="9.75" fill="#d8d9da">0.4</text><line x1="55.50" y1="765.50" x2="1859.00" y2="765.50" stroke="rgba(200,200,200,0.13)" stroke-width="1"/><text x="55.00" y="769.50" text-anchor="end" font-size="9.75" fill="#d8d9da">0.6</text><line x1="55.50" y1="738.50" x2="1859.00" y2="738.50" stroke="rgba(200,200,200,0.13)" stroke-width="1"/><text x="55.00" y="742.50" text-anchor="end" font-size="9.75" fill="#d8d9da">0.8</text><line x1="55.50" y1="712.50" x2="1859.00" y2="712.50" stroke="rgba(200,200,200,0.13)" stroke-width="1"/><text x="55.00" y="716.50" text-anchor="end" font-size="9.75" fill="#d8d9da">1.0</text><line x1="59.50" y1="712.50" x2="59.50" y2="845.50" stroke="rgba(200,200,200,0.13)" stroke-width="1"/><text x="66.30" y="857.00" text-anchor="middle" font-size="9.75" fill="#d8d9da" textLength="34" lengthAdjust="spacingAndGlyphs">17:38:30</text><line x1="110.50" y1="712.50" x2="110.50" y2="845.50" stroke="rgba(200,200,200,0.13)" stroke-width="1"/><text x="117.30" y="857.00" text-anchor="middle" font-size="9.75" fill="#d8d9da" textLength="34" lengthAdjust="spacingAndGlyphs">17:38:40</text><line x1="161.50" y1="712.50" x2="161.50" y2="845.50" stroke="rgba(200,200,200,0.13)" stroke-width="1"/><text x="168.30" y="857.00" text-anchor="middle" font-size="9.75" fill="#d8d9da" textLength="34" lengthAdjust="spacingAndGlyphs">17:38:50</text><line x1="213.50" y1="712.50" x2="213.50" y2="845.50" stroke="rgba(200,200,200,0.13)" stroke-width="1"/><text x="220.30" y="857.00" text-anchor="middle" font-size="9.75" fill="#d8d9da" textLength="34" lengthAdjust="spacingAndGlyphs">17:39:00</text><line x1="264.50" y1="712.50" x2="264.50" y2="845.50" stroke="rgba(200,200,200,0.13)" stroke-width="1"/><text x="271.30" y="857.00" text-anchor="middle" font-size="9.75" fill="#d8d9da" textLength="34" lengthAdjust="spacingAndGlyphs">17:39:10</text><line x1="315.50" y1="712.50" x2="315.50" y2="845.50" stroke="rgba(200,200,200,0.13)" stroke-width="1"/><text x="322.30" y="857.00" text-anchor="middle" font-size="9.75" fill="#d8d9da" textLength="34" lengthAdjust="spacingAndGlyphs">17:39:20</text><line x1="366.50" y1="712.50" x2="366.50" y2="845.50" stroke="rgba(200,200,200,0.13)" stroke-width="1"/><text x="373.30" y="857.00" text-anchor="middle" font-size="9.75" fill="#d8d9da" textLength="34" lengthAdjust="spacingAndGlyphs">17:39:30</text><line x1="417.50" y1="712.50" x2="417.50" y2="845.50" stroke="rgba(200,200,200,0.13)" stroke-width="1"/><text x="424.30" y="857.00" text-anchor="middle" font-size="9.75" fill="#d8d9da" textLength="34" lengthAdjust="spacingAndGlyphs">17:39:40</text><line x1="468.50" y1="712.50" x2="468.50" y2="845.50" stroke="rgba(200,200,200,0.13)" stroke-width="1"/><text x="475.30" y="857.00" text-anchor="middle" font-size="9.75" fill="#d8d9da" textLength="34" lengthAdjust="spacingAndGlyphs">17:39:50</text><line x1="519.50" y1="712.50" x2="519.50" y2="845.50" stroke="rgba(200,200,200,0.13)" stroke-width="1"/><text x="526.30" y="857.00" text-anchor="middle" font-size="9.75" fill="#d8d9da" textLength="34" lengthAdjust="spacingAndGlyphs">17:40:00</text><line x1="570.50" y1="712.50" x2="570.50" y2="845.50" stroke="rgba(200,200,200,0.13)" stroke-width="1"/><text x="577.30" y="857.00" text-anchor="middle" font-size="9.75" fill="#d8d9da" textLength="34" lengthAdjust="spacingAndGlyphs">17:40:10</text><line x1="621.50" y1="712.50" x2="621.50" y2="845.50" stroke="rgba(200,200,200,0.13)" stroke-width="1"/><text x="628.30" y="857.00" text-anchor="middle" font-size="9.75" fill="#d8d9da" textLength="34" lengthAdjust="spacingAndGlyphs">17:40:20</text><line x1="672.50" y1="712.50" x2="672.50" y2="845.50" stroke="rgba(200,200,200,0.13)" stroke-width="1"/><text x="679.30" y="857.00" text-anchor="middle" font-size="9.75" fill="#d8d9da" textLength="34" lengthAdjust="spacingAndGlyphs">17:40:30</text><line x1="723.50" y1="712.50" x2="723.50" y2="845.50" stroke="rgba(200,200,200,0.13)" stroke-width="1"/><text x="730.30" y="857.00" text-anchor="middle" font-size="9.75" fill="#d8d9da" textLength="34" lengthAdjust="spacingAndGlyphs">17:40:40</text><line x1="774.50" y1="712.50" x2="774.50" y2="845.50" stroke="rgba(200,200,200,0.13)" stroke-width="1"/><text x="781.30" y="857.00" text-anchor="middle" font-size="9.75" fill="#d8d9da" textLength="34" lengthAdjust="spacingAndGlyphs">17:40:50</text><line x1="825.50" y1="712.50" x2="825.50" y2="845.50" stroke="rgba(200,200,200,0.13)" stroke-width="1"/><text x="832.30" y="857.00" text-anchor="middle" font-size="9.75" fill="#d8d9da" textLength="34" lengthAdjust="spacingAndGlyphs">17:41:00</text><line x1="877.50" y1="712.50" x2="877.50" y2="845.50" stroke="rgba(200,200,200,0.13)" stroke-width="1"/><text x="884.30" y="857.00" text-anchor="middle" font-size="9.75" fill="#d8d9da" textLength="34" lengthAdjust="spacingAndGlyphs">17:41:10</text><line x1="928.50" y1="712.50" x2="928.50" y2="845.50" stroke="rgba(200,200,200,0.13)" stroke-width="1"/><text x="935.30" y="857.00" text-anchor="middle" font-size="9.75" fill="#d8d9da" textLength="34" lengthAdjust="spacingAndGlyphs">17:41:20</text><line x1="979.50" y1="712.50" x2="979.50" y2="845.50" stroke="rgba(200,200,200,0.13)" stroke-width="1"/><text x="986.30" y="857.00" text-anchor="middle" font-size="9.75" fill="#d8d9da" textLength="34" lengthAdjust="spacingAndGlyphs">17:41:30</text><line x1="1030.50" y1="712.50" x2="1030.50" y2="845.50" stroke="rgba(200,200,200,0.13)" stroke-width="1"/><text x="1037.30" y="857.00" text-anchor="middle" font-size="9.75" fill="#d8d9da" textLength="34" lengthAdjust="spacingAndGlyphs">17:41:40</text><line x1="1081.50" y1="712.50" x2="1081.50" y2="845.50" stroke="rgba(200,200,200,0.13)" stroke-width="1"/><text x="1088.30" y="857.00" text-anchor="middle" font-size="9.75" fill="#d8d9da" textLength="34" lengthAdjust="spacingAndGlyphs">17:41:50</text><line x1="1132.50" y1="712.50" x2="1132.50" y2="845.50" stroke="rgba(200,200,200,0.13)" stroke-width="1"/><text x="1139.30" y="857.00" text-anchor="middle" font-size="9.75" fill="#d8d9da" textLength="34" lengthAdjust="spacingAndGlyphs">17:42:00</text><line x1="1183.50" y1="712.50" x2="1183.50" y2="845.50" stroke="rgba(200,200,200,0.13)" stroke-width="1"/><text x="1190.30" y="857.00" text-anchor="middle" font-size="9.75" fill="#d8d9da" textLength="34" lengthAdjust="spacingAndGlyphs">17:42:10</text><line x1="1234.50" y1="712.50" x2="1234.50" y2="845.50" stroke="rgba(200,200,200,0.13)" stroke-width="1"/><text x="1241.30" y="857.00" text-anchor="middle" font-size="9.75" fill="#d8d9da" textLength="34" lengthAdjust="spacingAndGlyphs">17:42:20</text><line x1="1285.50" y1="712.50" x2="1285.50" y2="845.50" stroke="rgba(200,200,200,0.13)" stroke-width="1"/><text x="1292.30" y="857.00" text-anchor="middle" font-size="9.75" fill="#d8d9da" textLength="34" lengthAdjust="spacingAndGlyphs">17:42:30</text><line x1="1336.50" y1="712.50" x2="1336.50" y2="845.50" stroke="rgba(200,200,200,0.13)" stroke-width="1"/><text x="1343.30" y="857.00" text-anchor="middle" font-size="9.75" fill="#d8d9da" textLength="34" lengthAdjust="spacingAndGlyphs">17:42:40</text><line x1="1387.50" y1="712.50" x2="1387.50" y2="845.50" stroke="rgba(200,200,200,0.13)" stroke-width="1"/><text x="1394.30" y="857.00" text-anchor="middle" font-size="9.75" fill="#d8d9da" textLength="34" lengthAdjust="spacingAndGlyphs">17:42:50</text><line x1="1438.50" y1="712.50" x2="1438.50" y2="845.50" stroke="rgba(200,200,200,0.13)" stroke-width="1"/><text x="1445.30" y="857.00" text-anchor="middle" font-size="9.75" fill="#d8d9da" textLength="34" lengthAdjust="spacingAndGlyphs">17:43:00</text><line x1="1490.50" y1="712.50" x2="1490.50" y2="845.50" stroke="rgba(200,200,200,0.13)" stroke-width="1"/><text x="1497.30" y="857.00" text-anchor="middle" font-size="9.75" fill="#d8d9da" textLength="34" lengthAdjust="spacingAndGlyphs">17:43:10</text><line x1="1541.50" y1="712.50" x2="1541.50" y2="845.50" stroke="rgba(200,200,200,0.13)" stroke-width="1"/><text x="1548.30" y="857.00" text-anchor="middle" font-size="9.75" fill="#d8d9da" textLength="34" lengthAdjust="spacingAndGlyphs">17:43:20</text><line x1="1592.50" y1="712.50" x2="1592.50" y2="845.50" stroke="rgba(200,200,200,0.13)" stroke-width="1"/><text x="1599.30" y="857.00" text-anchor="middle" font-size="9.75" fill="#d8d9da" textLength="34" lengthAdjust="spacingAndGlyphs">17:43:30</text><line x1="1643.50" y1="712.50" x2="1643.50" y2="845.50" stroke="rgba(200,200,200,0.13)" stroke-width="1"/><text x="1650.30" y="857.00" text-anchor="middle" font-size="9.75" fill="#d8d9da" textLength="34" lengthAdjust="spacingAndGlyphs">17:43:40</text><line x1="1694.50" y1="712.50" x2="1694.50" y2="845.50" stroke="rgba(200,200,200,0.13)" stroke-width="1"/><text x="1701.30" y="857.00" text-anchor="middle" font-size="9.75" fill="#d8d9da" textLength="34" lengthAdjust="spacingAndGlyphs">17:43:50</text><line x1="1745.50" y1="712.50" x2="1745.50" y2="845.50" stroke="rgba(200,200,200,0.13)" stroke-width="1"/><text x="1752.30" y="857.00" text-anchor="middle" font-size="9.75" fill="#d8d9da" textLength="34" lengthAdjust="spacingAndGlyphs">17:44:00</text><line x1="1796.50" y1="712.50" x2="1796.50" y2="845.50" stroke="rgba(200,200,200,0.13)" stroke-width="1"/><text x="1803.30" y="857.00" text-anchor="middle" font-size="9.75" fill="#d8d9da" textLength="34" lengthAdjust="spacingAndGlyphs">17:44:10</text><line x1="1847.50" y1="712.50" x2="1847.50" y2="845.50" stroke="rgba(200,200,200,0.13)" stroke-width="1"/><text x="1854.30" y="857.00" text-anchor="middle" font-size="9.75" fill="#d8d9da" textLength="34" lengthAdjust="spacingAndGlyphs">17:44:20</text><rect x="596.50" y="714.50" width="306.00" height="131.00" fill="#E24D42" fill-opacity="0.1"/><path d="M53.00,845.50 L596.50,845.50 L596.50,714.50 L902.50,714.50 L902.50,845.50 L1822.00,845.50" fill="none" stroke="#E24D42" stroke-width="1.5" stroke-opacity="0.85"/></svg>
<div class="abs" style="left:47px;top:251.5px;width:7px;height:2px;background:#7EB26D"></div><div class="abs" style="left:109.2px;top:251.5px;width:7px;height:2px;background:#EAB839"></div><div class="abs" style="left:47px;top:491.5px;width:7px;height:2px;background:#7EB26D"></div><div class="abs" style="left:47px;top:671.5px;width:7px;height:2px;background:#7EB26D"></div><div class="abs" style="left:190.5px;top:671.5px;width:7px;height:2px;background:#EAB839"></div><div class="abs" style="left:353.3px;top:671.5px;width:7px;height:2px;background:#6ED0E0"></div>
<div class="abs" style="left:1312px;top:424px;width:115px;height:30px;background:#141414;border-radius:2px"></div>
<svg class="abs" style="left:0;top:0" width="1879" height="861" viewBox="0 0 1879 861"><defs><linearGradient id="lg" x1="0" y1="0" x2="0" y2="1"><stop offset="0" stop-color="#f0582e"/><stop offset="0.5" stop-color="#f58a36"/><stop offset="1" stop-color="#fbcf3c"/></linearGradient></defs><path d="M11.51,1.60 L13.04,1.26 L14.47,3.02 L15.67,3.23 L17.62,2.06 L18.94,2.91 L18.71,5.16 L19.40,6.16 L21.60,6.71 L21.94,8.24 L20.18,9.67 L19.97,10.87 L21.14,12.82 L20.29,14.14 L18.04,13.91 L17.04,14.60 L16.49,16.80 L14.96,17.14 L13.53,15.38 L12.33,15.17 L10.38,16.34 L9.06,15.49 L9.29,13.24 L8.60,12.24 L6.40,11.69 L6.06,10.16 L7.82,8.73 L8.03,7.53 L6.86,5.58 L7.71,4.26 L9.96,4.49 L10.96,3.80 Z" fill="url(#lg)"/><circle cx="14.0" cy="9.2" r="6.5" fill="url(#lg)"/><circle cx="14.4" cy="9.399999999999999" r="4.5" fill="#000"/><path d="M18.80,9.00 L16.70,9.60 A2.2,2.2 0 1 0 15.69,11.45" fill="none" stroke="#ee7832" stroke-width="1.1"/><path d="M14.7,50.2 V58 M10.8,54.1 H18.6" stroke="#b5b5b5" stroke-width="1.6"/><rect x="9.0" y="72.0" width="5.0" height="5.0" rx="1.1" fill="#a5a5a5"/><rect x="9.0" y="77.8" width="5.0" height="5.0" rx="1.1" fill="#a5a5a5"/><rect x="14.8" y="72.0" width="5.0" height="5.0" rx="1.1" fill="#a5a5a5"/><rect x="14.8" y="77.8" width="5.0" height="5.0" rx="1.1" fill="#a5a5a5"/><circle cx="14.4" cy="100.4" r="5.5" fill="#a8a8a8"/><path transform="rotate(-14 14.4 100.4)" d="M14.4,95.9 Q15.0,99.8 18.9,100.4 Q15.0,101.0 14.4,104.9 Q13.8,101.0 9.9,100.4 Q13.8,99.8 14.4,95.9 Z" fill="#000"/><circle cx="14.4" cy="100.4" r="0.5" fill="#666"/><rect x="37.0" y="3.0" width="4.8" height="4.8" rx="1.0" fill="#b0b0b0"/><rect x="37.0" y="8.3" width="4.8" height="4.8" rx="1.0" fill="#b0b0b0"/><rect x="42.3" y="3.0" width="4.8" height="4.8" rx="1.0" fill="#b0b0b0"/><rect x="42.3" y="8.3" width="4.8" height="4.8" rx="1.0" fill="#b0b0b0"/><path d="M86.2,4.6 L90.6,8.0 L86.2,11.4" fill="none" stroke="#8e8e8e" stroke-width="1.4"/><path d="M243.6,7.2 H248.6 L246.1,9.9 Z" fill="#d8d9da"/><path d="M41.8,34.6 L45.3,38.4 L48.8,34.6" fill="none" stroke="#8e8e8e" stroke-width="1.6"/><path d="M41.8,294.4 L45.3,298.2 L48.8,294.4" fill="none" stroke="#8e8e8e" stroke-width="1.6"/><path d="M41.6,271.8 L46.2,275.6 L41.6,279.4" fill="none" stroke="#8e8e8e" stroke-width="1.6"/><rect x="1869.2" y="271.5" width="1.2" height="1.2" fill="#5a5a5c"/><rect x="1872.2" y="271.5" width="1.2" height="1.2" fill="#5a5a5c"/><rect x="1869.2" y="274.1" width="1.2" height="1.2" fill="#5a5a5c"/><rect x="1872.2" y="274.1" width="1.2" height="1.2" fill="#5a5a5c"/><rect x="1869.2" y="276.7" width="1.2" height="1.2" fill="#5a5a5c"/><rect x="1872.2" y="276.7" width="1.2" height="1.2" fill="#5a5a5c"/><rect x="1869.2" y="279.3" width="1.2" height="1.2" fill="#5a5a5c"/><rect x="1872.2" y="279.3" width="1.2" height="1.2" fill="#5a5a5c"/><path d="M981.6,317.6 H986.6 L984.1,320.2 Z" fill="#b0b0b0"/><path d="M1870.5,261.5 H1873.5 V258.5" fill="none" stroke="#8a8a8a" stroke-width="1"/><path d="M1870.5,501.5 H1873.5 V498.5" fill="none" stroke="#8a8a8a" stroke-width="1"/><path d="M1870.5,681.5 H1873.5 V678.5" fill="none" stroke="#8a8a8a" stroke-width="1"/><rect x="1317.4" y="442.5" width="7.2" height="2" fill="#7EB26D"/><circle cx="1285.6" cy="472.5" r="1.3" fill="#7EB26D" fill-opacity="0.6"/><rect x="1440.9" y="7.1" width="1.7" height="4.80" fill="#e9e9e9"/><rect x="1443.2" y="6.1" width="1.7" height="5.80" fill="#e9e9e9"/><rect x="1445.5" y="8.3" width="1.7" height="3.60" fill="#e9e9e9"/><rect x="1447.8" y="5.0" width="1.7" height="6.90" fill="#e9e9e9"/><path d="M1451.7,5.8 V11 M1449.1,8.4 H1454.3" stroke="#f5a030" stroke-width="1.7"/><polygon points="1470.70,4.30 1471.82,7.06 1474.79,7.27 1472.51,9.19 1473.23,12.08 1470.70,10.50 1468.17,12.08 1468.89,9.19 1466.61,7.27 1469.58,7.06" fill="none" stroke="#9d9d9d" stroke-width="1.0" stroke-linejoin="miter"/><path d="M1489.6,6.2 H1487.0 V12.0 H1494.0 V10.2" fill="none" stroke="#9d9d9d" stroke-width="1.1"/><path d="M1489.2,11.0 Q1489.6,7.2 1493.2,7.0 V5.0 L1495.6,7.6 L1493.2,10.0 V8.4 Q1490.8,8.6 1489.2,11.0 Z" fill="#9d9d9d"/><path d="M1507.4,5.4 H1513.0 L1514.6,7.0 V12.6 H1507.4 Z" fill="none" stroke="#9d9d9d" stroke-width="1.0"/><rect x="1509.0" y="5.4" width="2.8" height="1.8" fill="none" stroke="#9d9d9d" stroke-width="0.8"/><rect x="1508.6" y="9.4" width="4.8" height="2.6" fill="#9d9d9d"/><path d="M1536.90,8.01 L1537.00,9.00 L1535.14,9.64 L1534.95,10.26 L1536.14,11.83 L1535.51,12.61 L1533.73,11.74 L1533.16,12.05 L1532.89,14.00 L1531.90,14.10 L1531.26,12.24 L1530.64,12.05 L1529.07,13.24 L1528.29,12.61 L1529.16,10.83 L1528.85,10.26 L1526.90,9.99 L1526.80,9.00 L1528.66,8.36 L1528.85,7.74 L1527.66,6.17 L1528.29,5.39 L1530.07,6.26 L1530.64,5.95 L1530.91,4.00 L1531.90,3.90 L1532.54,5.76 L1533.16,5.95 L1534.73,4.76 L1535.51,5.39 L1534.64,7.17 L1534.95,7.74 Z" fill="#8c8c8c"/><circle cx="1531.9" cy="9.0" r="3.6" fill="#8c8c8c"/><circle cx="1531.9" cy="9.0" r="1.2" fill="#3a3a3c"/><rect x="1554.2" y="4.6" width="9.2" height="6.3" rx="0.8" fill="none" stroke="#9d9d9d" stroke-width="1.2"/><rect x="1558.0" y="10.9" width="1.8" height="1.8" fill="#9d9d9d"/><rect x="1556.6" y="12.2" width="4.6" height="0.9" fill="#9d9d9d"/><path d="M1584.0,5.8 L1580.0,9.5 L1584.0,13.2" fill="none" stroke="#9d9d9d" stroke-width="1.8"/><path d="M1807.6,5.8 L1811.6,9.5 L1807.6,13.2" fill="none" stroke="#9d9d9d" stroke-width="1.8"/><circle cx="1598.8" cy="8.9" r="3.5" fill="none" stroke="#9d9d9d" stroke-width="1.0"/><path d="M1598.8,8.9 L1597.6,10.3" stroke="#9d9d9d" stroke-width="0.8"/><circle cx="1826.5" cy="8.3" r="3.2" fill="none" stroke="#9d9d9d" stroke-width="1.3"/><path d="M1828.9,10.7 L1831.4,13.0" stroke="#9d9d9d" stroke-width="1.6"/><path d="M1824.9,8.3 H1828.1" stroke="#9d9d9d" stroke-width="1.0"/><path d="M1844.4,8.0 A3.6,3.6 0 0 1 1850.6,7.2" fill="none" stroke="#9d9d9d" stroke-width="1.4"/><path d="M1851.4,5.0 V8.6 H1847.8 Z" fill="#9d9d9d"/><path d="M1850.2,9.8 A3.6,3.6 0 0 1 1844.0,10.6" fill="none" stroke="#9d9d9d" stroke-width="1.4"/><path d="M1843.2,12.8 V9.2 H1846.8 Z" fill="#9d9d9d"/><rect x="1855.0" y="1" width="1" height="14" fill="#1f2022"/><path d="M1861.4,8.3 H1866.9 L1864.15,11.1 Z" fill="#9d9d9d"/></svg>
<div id="tx"><span class="t" style="left:51.80px;top:4.06px;font-size:9.5px;line-height:9.5px;font-weight:400;color:#8e8e8e;transform:scaleX(0.9278);transform-origin:0 0">Knative</span><span class="t" style="left:95.90px;top:4.06px;font-size:9.5px;line-height:9.5px;font-weight:400;color:#d8d9da;transform:scaleX(0.9255);transform-origin:0 0">Knative Serving - Scaling Debugging</span><span class="t" style="left:53.90px;top:32.06px;font-size:9.5px;line-height:9.5px;font-weight:700;color:#d8d9da;transform:scaleX(0.8708);transform-origin:0 0">Revision Pod Counts</span><span class="t" style="left:51.50px;top:272.06px;font-size:9.5px;line-height:9.5px;font-weight:700;color:#d8d9da;transform:scaleX(0.8742);transform-origin:0 0">Resource Usages</span><span class="t" style="left:128.50px;top:272.06px;font-size:9.5px;line-height:9.5px;font-weight:400;color:#8e8e8e;transform:scaleX(0.9183);transform-origin:0 0;font-style:italic">(2 panels)</span><span class="t" style="left:53.90px;top:292.06px;font-size:9.5px;line-height:9.5px;font-weight:700;color:#d8d9da;transform:scaleX(0.8975);transform-origin:0 0">Autoscaler Metrics</span><span class="t" style="left:913.90px;top:52.06px;font-size:9.5px;line-height:9.5px;font-weight:700;color:#d8d9da;transform:scaleX(0.8708);transform-origin:0 0">Revision Pod Counts</span><span class="t" style="left:932.60px;top:312.06px;font-size:9.5px;line-height:9.5px;font-weight:700;color:#d8d9da;transform:scaleX(0.8647);transform-origin:0 0">Pod Counts</span><span class="t" style="left:910.00px;top:512.06px;font-size:9.5px;line-height:9.5px;font-weight:700;color:#d8d9da;transform:scaleX(0.8679);transform-origin:0 0">Observed Concurrency</span><span class="t" style="left:931.80px;top:692.06px;font-size:9.5px;line-height:9.5px;font-weight:700;color:#d8d9da;transform:scaleX(0.9016);transform-origin:0 0">Panic Mode</span><span class="t" style="left:56.00px;top:247.85px;font-size:9.75px;line-height:9.75px;font-weight:400;color:#d8d9da;transform:scaleX(0.9168);transform-origin:0 0">Actual Pods</span><span class="t" style="left:119.00px;top:247.85px;font-size:9.75px;line-height:9.75px;font-weight:400;color:#d8d9da;transform:scaleX(0.8739);transform-origin:0 0">Requested Pods</span><span class="t" style="left:56.00px;top:487.85px;font-size:9.75px;line-height:9.75px;font-weight:400;color:#d8d9da;transform:scaleX(0.8970);transform-origin:0 0">Desired Pods</span><span class="t" style="left:56.20px;top:667.85px;font-size:9.75px;line-height:9.75px;font-weight:400;color:#d8d9da;transform:scaleX(0.9026);transform-origin:0 0">60 Second Average Concurrency</span><span class="t" style="left:199.60px;top:667.85px;font-size:9.75px;line-height:9.75px;font-weight:400;color:#d8d9da;transform:scaleX(0.9040);transform-origin:0 0">6 Second Average Panic Concurrency</span><span class="t" style="left:362.30px;top:667.85px;font-size:9.75px;line-height:9.75px;font-weight:400;color:#d8d9da;transform:scaleX(0.9171);transform-origin:0 0">60 Second Target Concurrency</span><span class="t" style="left:1605.00px;top:5.06px;font-size:9.5px;line-height:9.5px;font-weight:400;color:#d8d9da;transform:scaleX(0.9466);transform-origin:0 0">Jun 25, 2019 17:38:28 to Jun 25, 2019 17:44:22</span><span class="t" style="left:1317.40px;top:427.06px;font-size:9.5px;line-height:9.5px;font-weight:700;color:#ffffff;transform:scaleX(1.1561);transform-origin:0 0">2019-06-25 17:42:30</span><span class="t" style="left:1326.90px;top:440.06px;font-size:9.5px;line-height:9.5px;font-weight:400;color:#d8d9da;transform:scaleX(0.9234);transform-origin:0 0">Desired Pods:</span><span class="t" style="left:1390.40px;top:440.06px;font-size:9.5px;line-height:9.5px;font-weight:700;color:#ffffff;transform:scaleX(1.0950);transform-origin:0 0">0</span></div>
</body></html>
